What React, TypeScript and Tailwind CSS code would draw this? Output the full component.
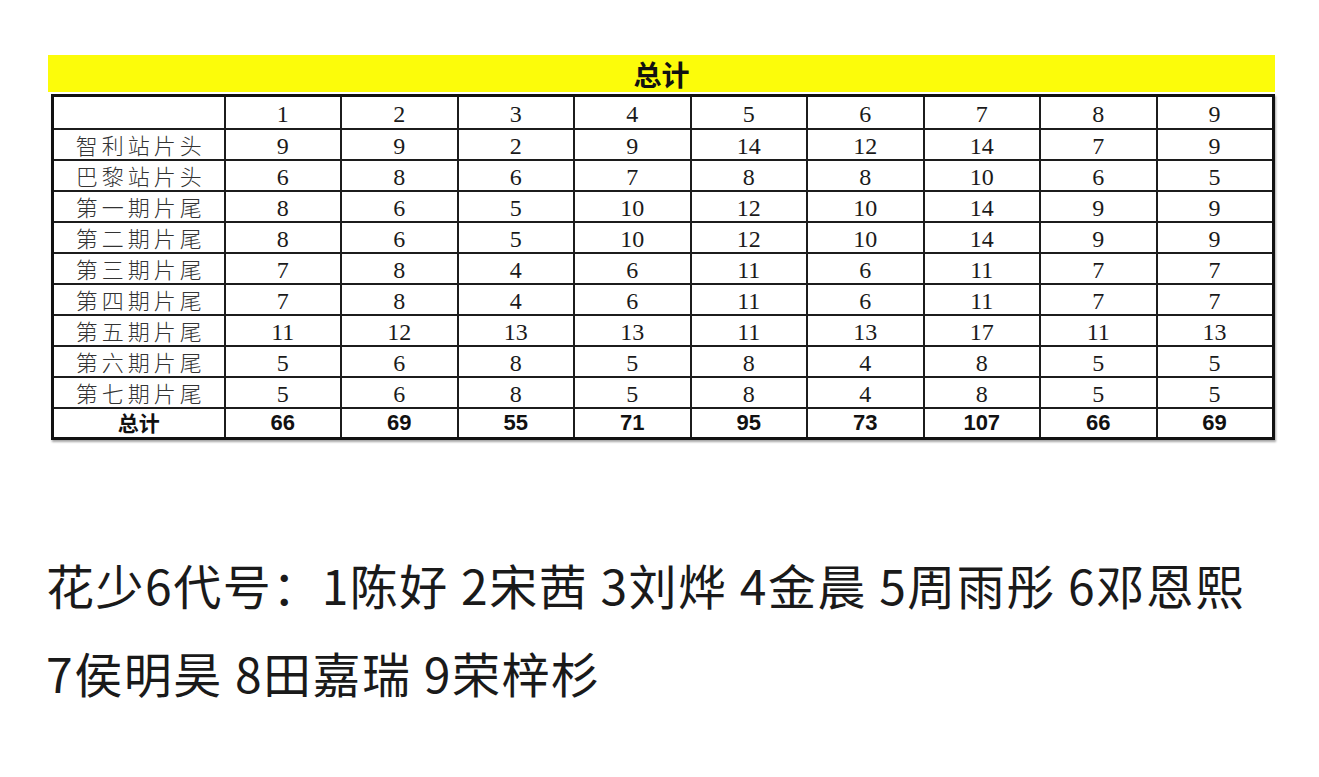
import React from 'react';

const rows: { label: string; values: number[] }[] = [
  { label: '智利站片头', values: [9, 9, 2, 9, 14, 12, 14, 7, 9] },
  { label: '巴黎站片头', values: [6, 8, 6, 7, 8, 8, 10, 6, 5] },
  { label: '第一期片尾', values: [8, 6, 5, 10, 12, 10, 14, 9, 9] },
  { label: '第二期片尾', values: [8, 6, 5, 10, 12, 10, 14, 9, 9] },
  { label: '第三期片尾', values: [7, 8, 4, 6, 11, 6, 11, 7, 7] },
  { label: '第四期片尾', values: [7, 8, 4, 6, 11, 6, 11, 7, 7] },
  { label: '第五期片尾', values: [11, 12, 13, 13, 11, 13, 17, 11, 13] },
  { label: '第六期片尾', values: [5, 6, 8, 5, 8, 4, 8, 5, 5] },
  { label: '第七期片尾', values: [5, 6, 8, 5, 8, 4, 8, 5, 5] },
];

const totals = [66, 69, 55, 71, 95, 73, 107, 66, 69];

const serif = "font-['Liberation_Serif','Noto_Sans_CJK_SC',serif]";
const cell = 'border-2 border-[#1c1c1c] text-center p-0';

export default function App() {
  return (
    <div className="min-h-screen bg-white">
      <div className="pt-[55px] pl-[48px]">
        {/* Title bar */}
        <div className="w-[1227px] h-[37px] bg-[#fcfc0a] flex items-center justify-center">
          <span className="font-['Noto_Sans_CJK_SC',sans-serif] font-bold text-[28px] text-[#111] leading-none">
            总计
          </span>
        </div>

        {/* Table */}
        <table
          className={`table-fixed ml-[3px] mt-[2px] w-[1221px] border-collapse border-[3px] border-[#111] shadow-[1px_2px_2px_rgba(0,0,0,0.35)] text-[#1a1a1a] ${serif}`}
        >
          <colgroup>
            <col className="w-[172px]" />
            {totals.map((_, i) => (
              <col key={i} className="w-[116.5px]" />
            ))}
          </colgroup>
          <tbody>
            <tr className="h-[33px]">
              <td className={cell}></td>
              {totals.map((_, i) => (
                <td key={i} className={`${cell} text-[24px] leading-none pt-[3px]`}>
                  {i + 1}
                </td>
              ))}
            </tr>
            {rows.map((r) => (
              <tr key={r.label} className="h-[31px]">
                <td className={`${cell} font-['Noto_Sans_CJK_SC',serif] text-[22px] font-light leading-none tracking-[4px] pl-[4px] text-[#333]`}>
                  {r.label}
                </td>
                {r.values.map((v, i) => (
                  <td key={i} className={`${cell} text-[24px] leading-none pt-[3px]`}>
                    {v}
                  </td>
                ))}
              </tr>
            ))}
            <tr className="h-[31px]">
              <td className={`${cell} font-['Noto_Sans_CJK_SC',sans-serif] font-bold text-[21px] leading-none text-[#111]`}>
                总计
              </td>
              {totals.map((t, i) => (
                <td
                  key={i}
                  className={`${cell} font-['Liberation_Sans',sans-serif] font-bold text-[22px] leading-none text-[#111]`}
                >
                  {t}
                </td>
              ))}
            </tr>
          </tbody>
        </table>
      </div>

      {/* Caption */}
      <div className="mt-[100px] pl-[46px] pr-[20px] font-['Noto_Sans_CJK_SC',sans-serif] text-[48px] leading-[88px] tracking-[1.5px] text-[#1a1a1a] whitespace-nowrap">
        <p>花少6代号：1陈好 2宋茜 3刘烨 4金晨 5周雨彤 6邓恩熙</p>
        <p>7侯明昊 8田嘉瑞 9荣梓杉</p>
      </div>
    </div>
  );
}
